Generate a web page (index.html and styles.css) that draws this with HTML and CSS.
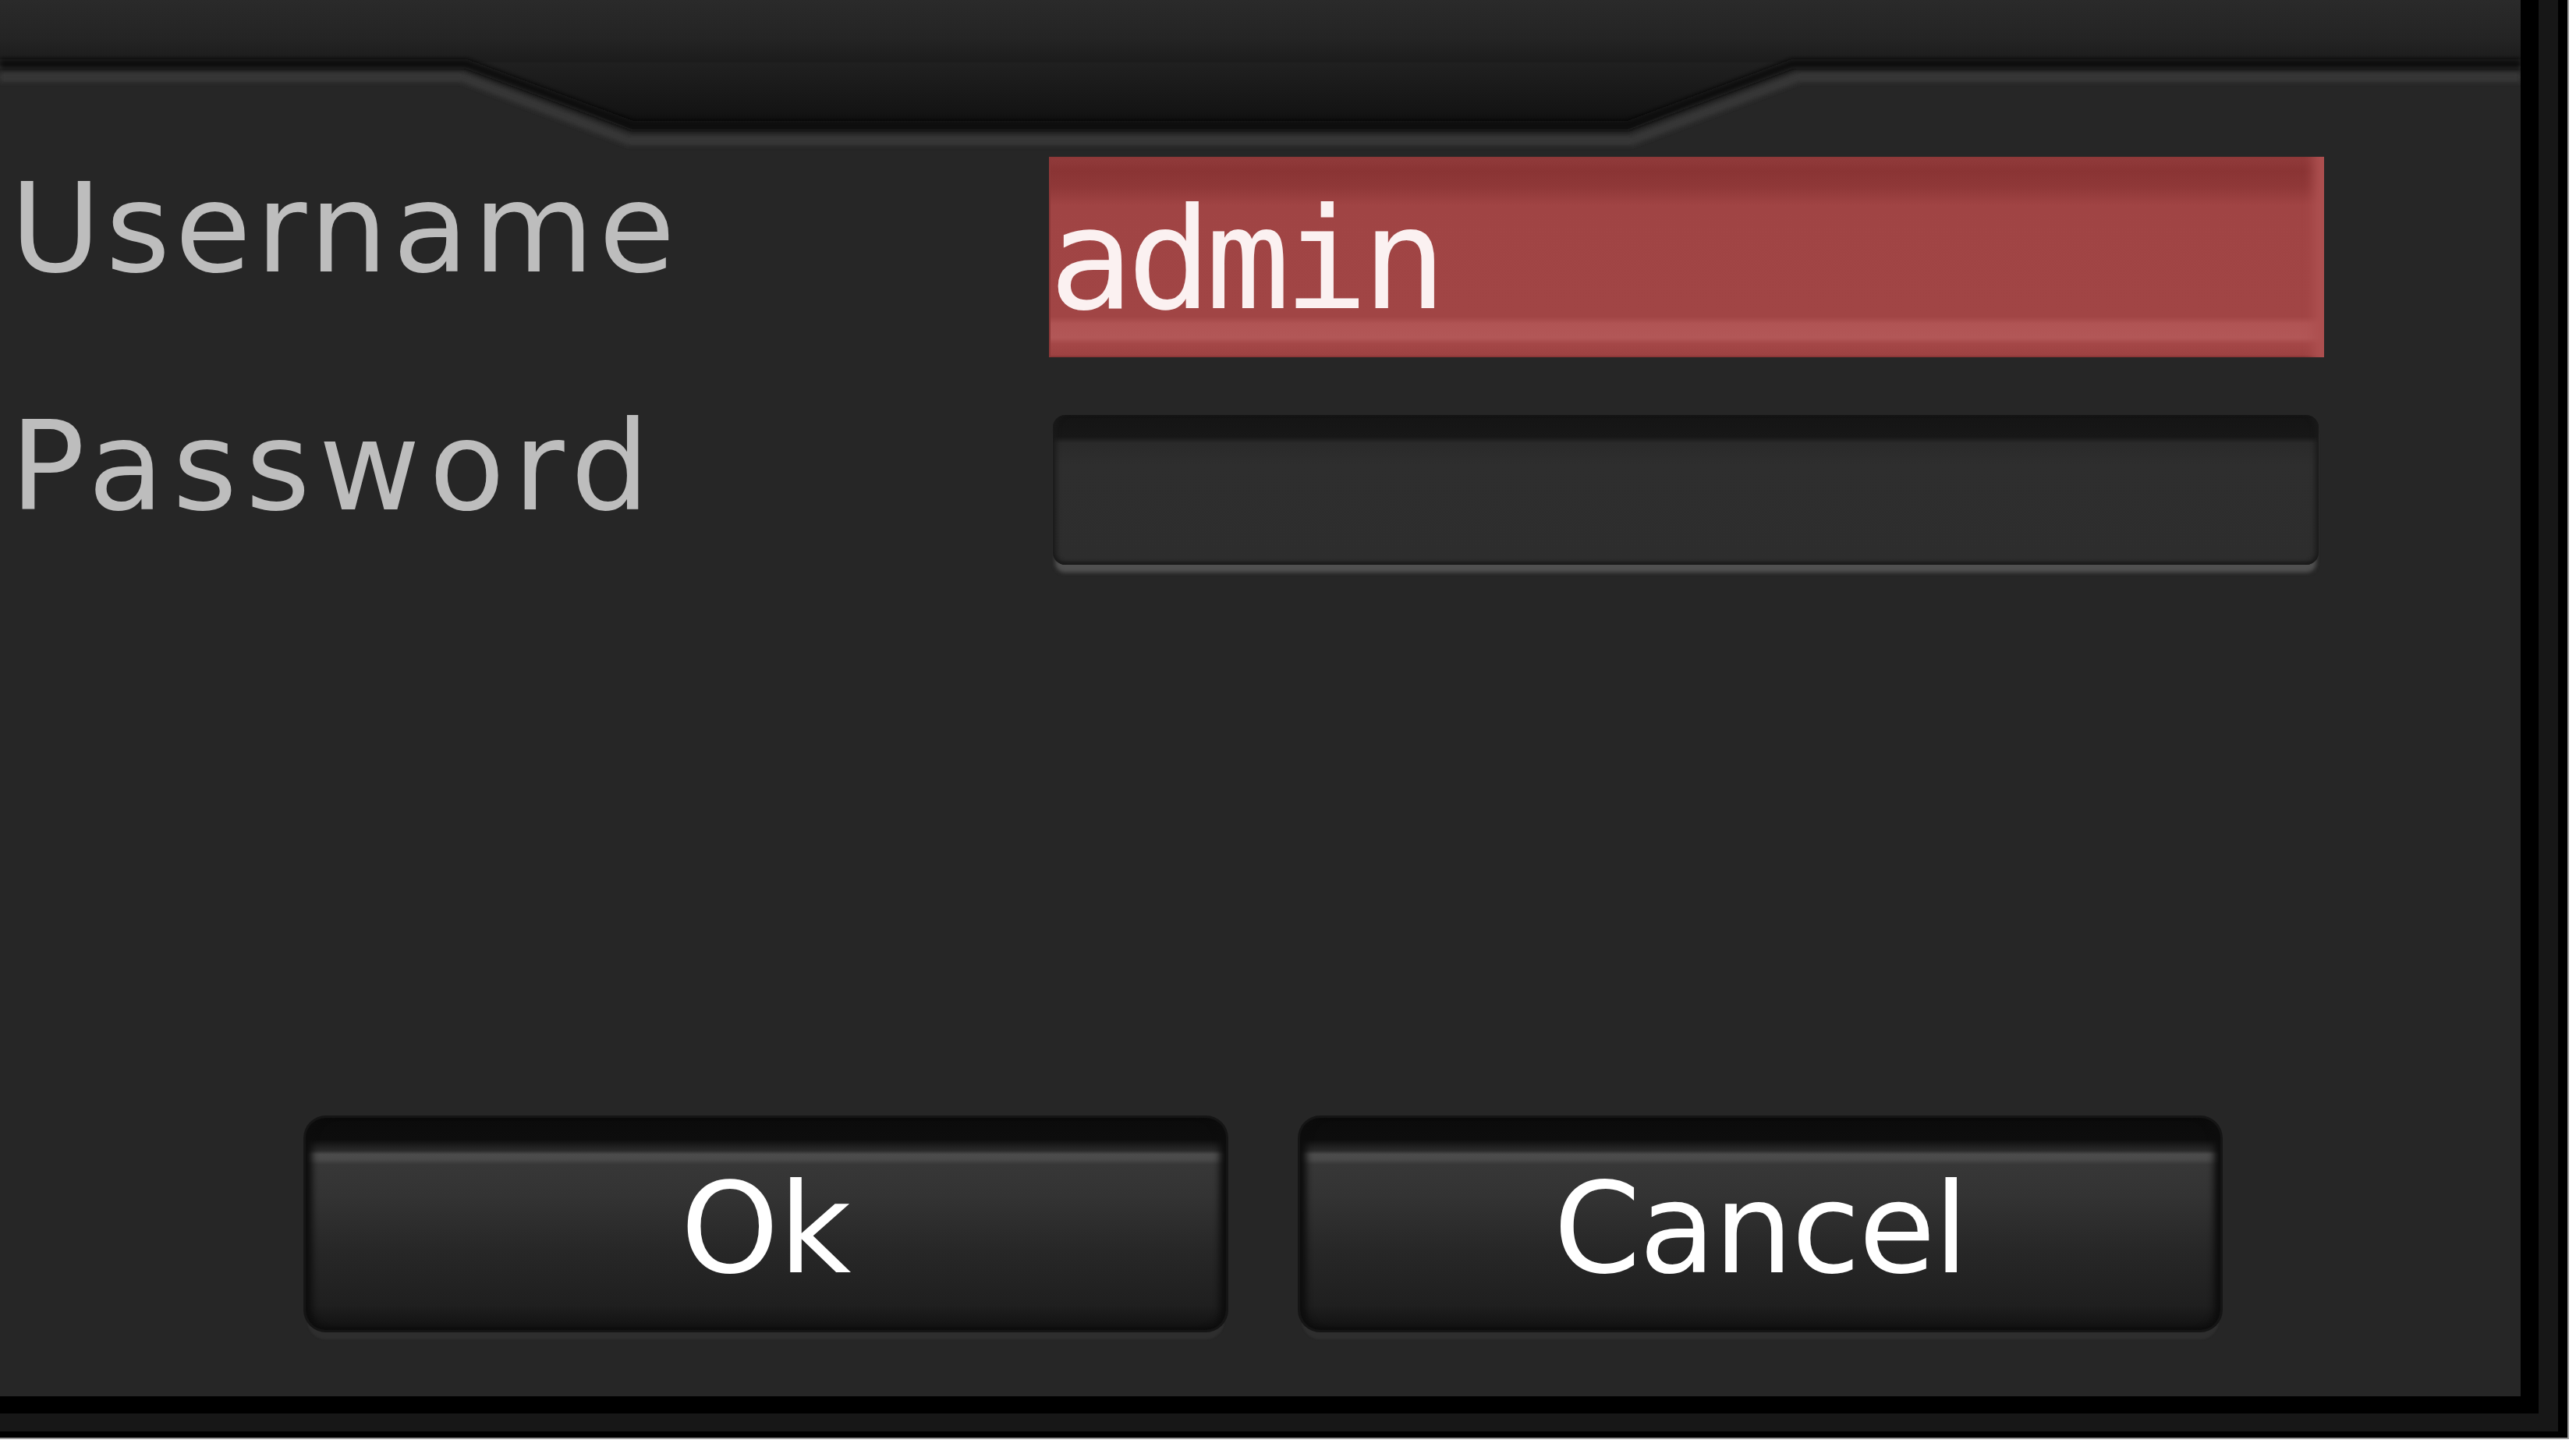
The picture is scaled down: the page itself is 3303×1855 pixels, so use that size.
FILE: index.html
```html
<!DOCTYPE html>
<html lang="en">
<head>
<meta charset="utf-8">
<title>Login</title>
<link rel="stylesheet" href="styles.css">
</head>
<body>
<div class="frame-outer">
  <div class="frame-mid">
    <div class="frame-inner">
      <div class="panel">
        <div class="panel-head">
          <svg class="head-art" width="3232" height="201" viewBox="0 0 3232 201" aria-hidden="true">
            <defs>
              <linearGradient id="topg" x1="0" y1="0" x2="0" y2="82" gradientUnits="userSpaceOnUse">
                <stop offset="0" stop-color="#2a2a2a"/>
                <stop offset="0.6" stop-color="#242424"/>
                <stop offset="1" stop-color="#1b1b1b"/>
              </linearGradient>
              <linearGradient id="tabg" x1="0" y1="0" x2="0" y2="168" gradientUnits="userSpaceOnUse">
                <stop offset="0" stop-color="#282828"/>
                <stop offset="0.5" stop-color="#1f1f1f"/>
                <stop offset="0.85" stop-color="#141414"/>
                <stop offset="1" stop-color="#0a0a0a"/>
              </linearGradient>
              <filter id="soft" x="-5%" y="-50%" width="110%" height="200%">
                <feGaussianBlur stdDeviation="3"/>
              </filter>
            </defs>
            <rect x="0" y="0" width="3232" height="84" fill="url(#topg)"/>
            <polygon points="598,80 811,166 2087,166 2298,80" fill="url(#tabg)"/>
            <polyline points="0,82 598,82 811,161 2087,161 2298,82 3232,82" fill="none" stroke="#0b0b0b" stroke-width="12" filter="url(#soft)"/>
            <polyline points="0,99 592,99 806,180 2092,180 2306,99 3232,99" fill="none" stroke="#383838" stroke-width="12" filter="url(#soft)"/>
          </svg>
        </div>
        <div class="form">
          <div class="label label-user">Username</div>
          <div class="field field-focused">admin</div>
          <div class="label label-pass">Password</div>
          <div class="field field-pass"></div>
        </div>
        <div class="actions">
          <div class="btn">Ok</div>
          <div class="btn btn-cancel">Cancel</div>
        </div>
      </div>
    </div>
  </div>
</div>
</body>
</html>
```

FILE: styles.css
```css
html, body {
  margin: 0;
  padding: 0;
  background: #ffffff;
}

.frame-outer {
  display: inline-block;
  vertical-align: top;
  background: #000;
  border-right: 2px solid #9a9a9a;
  border-bottom: 2px solid #9a9a9a;
  padding: 0 12px 8px 0;
}

.frame-mid {
  background: #171717;
  padding: 0 25px 23px 0;
}

.frame-inner {
  background: #000;
  padding: 0 23px 22px 0;
}

.panel {
  width: 3232px;
  height: 1790px;
  background: #262626;
  box-sizing: border-box;
  overflow: hidden;
}

.panel-head {
  height: 201px;
}

.head-art {
  display: block;
}

.form {
  display: grid;
  grid-template-columns: 1332px 1635px;
  row-gap: 60px;
  padding-left: 13px;
  align-items: start;
}

.label {
  font-family: "DejaVu Sans", Verdana, sans-serif;
  font-size: 159px;
  line-height: 159px;
  letter-spacing: 6px;
  color: #bdbdbd;
  white-space: nowrap;
}

.label-user {
  margin-top: 12px;
}

.label-pass {
  letter-spacing: 11px;
}

.field {
  box-sizing: border-box;
}

.field-focused {
  height: 257px;
  background: linear-gradient(#913b3b 0, #8a3434 18px, #8f3838 38px, #a04444 62px, #a14545 205px, #b05454 214px, #b25757 232px, #a44747 240px, #9c4141 100%);
  box-shadow: inset -38px 0 14px -24px #ad5050, inset 0 0 0 2px #8d3838;
  font-family: "DejaVu Sans Mono", "Liberation Mono", monospace;
  font-size: 180px;
  line-height: 264px;
  letter-spacing: -8px;
  color: #fbf1f1;
  padding-left: 0;
  overflow: hidden;
  white-space: nowrap;
}

.field-pass {
  margin: 14px 7px 0 5px;
  height: 192px;
  border-radius: 16px;
  background: linear-gradient(#141414 0, #171717 28px, #2a2a2a 36px, #2e2e2e 64px, #2d2d2d 100%);
  box-shadow: inset 8px 0 6px -4px #1a1a1a, inset -8px 0 6px -4px #1a1a1a, inset 0 -6px 4px -2px #1c1c1c, 0 13px 5px -3px #505050;
}

.actions {
  display: flex;
  gap: 95px;
  padding-left: 392px;
  margin-top: 709px;
}

.btn {
  width: 1180px;
  height: 272px;
  box-sizing: border-box;
  border-radius: 26px;
  background: linear-gradient(#0b0b0b 0, #0d0d0d 28px, #2a2a2a 42px, #4c4c4c 47px, #4a4a4a 53px, #373737 60px, #333333 100px, #272727 170px, #1f1f1f 240px, #151515 262px, #0e0e0e 100%);
  box-shadow: inset 14px 0 8px -6px #0d0d0d, inset -14px 0 8px -6px #0d0d0d, 0 0 0 3px #151515, 0 14px 2px -2px #2e2e2e;
  font-family: "DejaVu Sans", Verdana, sans-serif;
  font-size: 160px;
  line-height: 258px;
  padding-top: 14px;
  color: #ffffff;
  text-align: center;
  white-space: nowrap;
}

.btn-cancel {
  letter-spacing: -2px;
}
```
